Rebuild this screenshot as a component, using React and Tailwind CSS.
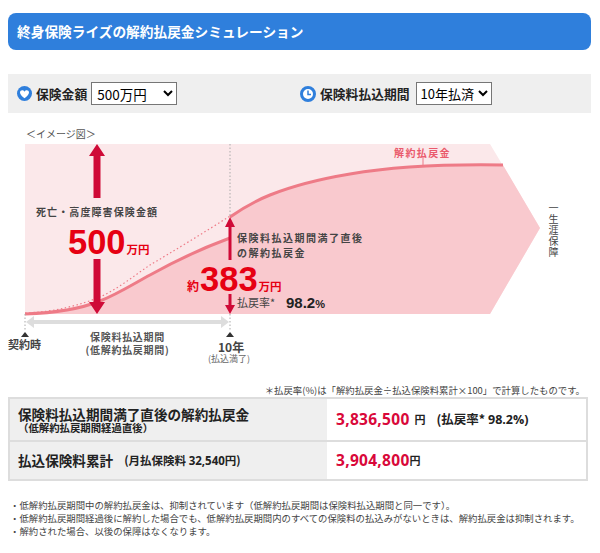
import React from 'react';

const jp = { fontFamily: '"Noto Sans CJK JP", sans-serif' };
const num = { fontFamily: '"Open Sans", sans-serif' };

function Chart() {
  return (
    <div className="relative h-[259px] w-[600px]">
      {/* coordinates below are page x, page y - 125 */}
      <svg className="absolute left-0 top-0" width="600" height="259" viewBox="0 0 600 259">
        <polygon points="25,19 490,19 540,103 490,189 25,189" fill="#fbe8ea" />
        <path d="M25,189 C55,188 80,184 100,176 C118,169 135,158 150,150 C168,140 200,124 230,113 L230,92 C240,85 255,76 270,70 C295,60 320,54 350,49 C385,43 440,39 503,40 L540,103 L490,189 Z" fill="#f9c9ce" />
        <path d="M25,188 C55,187 80,180 100,172 C118,164 135,150 150,140 C172,127 205,107 230,91" fill="none" stroke="#ee7b87" strokeWidth="1.2" strokeDasharray="1.5 2.5" />
        <path d="M25,189 C55,188 80,184 100,176 C118,169 135,158 150,150 C168,140 200,124 230,113" fill="none" stroke="#ee7b87" strokeWidth="3" />
        <path d="M230,92 C240,85 255,76 270,70 C295,60 320,54 350,49 C385,43 440,39 503,40" fill="none" stroke="#ee7b87" strokeWidth="3" />
        <line x1="423" y1="33" x2="423" y2="41" stroke="#ee7b87" strokeWidth="1" />
        <line x1="230" y1="19" x2="230" y2="92" stroke="#aaaaaa" strokeWidth="1" strokeDasharray="1.5 2" />
        <line x1="25" y1="189" x2="25" y2="205" stroke="#aaaaaa" strokeWidth="1" strokeDasharray="1.5 2" />
        <line x1="230" y1="189" x2="230" y2="205" stroke="#aaaaaa" strokeWidth="1" strokeDasharray="1.5 2" />
        {/* big arrow */}
        <path d="M97,19 L105,31 L100.5,31 L100.5,73 L93.5,73 L93.5,31 L89,31 Z" fill="#cf0a37" />
        <path d="M97,189 L105,177 L100.5,177 L100.5,134 L93.5,134 L93.5,177 L89,177 Z" fill="#cf0a37" />
        {/* small arrow */}
        <path d="M230,92 L235,102 L231.5,102 L231.5,135 L228.5,135 L228.5,102 L225,102 Z" fill="#cf0a37" />
        <path d="M230,189 L235,180 L231.5,180 L231.5,169 L228.5,169 L228.5,180 L225,180 Z" fill="#cf0a37" />
        {/* period arrow */}
        <path d="M26,197 L34,191 L34,195 L221,195 L221,191 L229,197 L221,203 L221,199 L34,199 L34,203 Z" fill="#dddddd" />
        <path d="M25,207 L29,212 L21,212 Z" fill="#333333" />
        <path d="M230,207 L234,212 L226,212 Z" fill="#333333" />
      </svg>

      <span className="absolute left-[26px] top-[2px] text-[10px] leading-[14px] text-[#555555]">＜イメージ図＞</span>
      <span className="absolute left-[36px] top-[80px] text-[10px] font-bold leading-[14px] tracking-[1.1px] text-[#444444]">死亡・高度障害保険金額</span>
      <span className="absolute left-[68px] top-[102px] flex items-baseline leading-[30px] text-[#e60012]" style={{ fontFamily: '"Liberation Sans", sans-serif' }}>
        <span className="text-[34.5px] font-bold">500</span>
        <span className="ml-[1px] text-[11.5px] font-bold" style={jp}>万円</span>
      </span>
      <span className="absolute left-[237px] top-[105px] text-[10px] font-bold leading-[15px] tracking-[1.5px] text-[#444444]">保険料払込期間満了直後<br />の解約払戻金</span>
      <span className="absolute left-[187px] top-[139px] flex items-baseline leading-[30px] text-[#e60012]" style={{ fontFamily: '"Liberation Sans", sans-serif' }}>
        <span className="text-[12px] font-bold" style={jp}>約</span>
        <span className="ml-[1px] text-[34.5px] font-bold">383</span>
        <span className="ml-[1px] text-[11.5px] font-bold" style={jp}>万円</span>
      </span>
      <span className="absolute left-[237px] top-[170px] text-[11px] leading-[14px] text-[#444444]">払戻率*</span>
      <span className="absolute left-[286px] top-[169px] text-[15px] font-bold leading-[18px] text-[#222222]" style={{ fontFamily: '"Liberation Sans", sans-serif' }}>98.2<span className="text-[11px]">%</span></span>
      <span className="absolute left-[394px] top-[21px] text-[10px] font-bold leading-[14px] tracking-[1.4px] text-[#ea5a6c]">解約払戻金</span>
      <span className="absolute left-[546px] top-[78px] text-[10px] leading-[14px] tracking-[1px] text-[#444444] [writing-mode:vertical-rl]">一生涯保障</span>
      <span className="absolute left-[8px] top-[212px] text-[11px] font-bold leading-[14px] text-[#444444]">契約時</span>
      <span className="absolute left-[65px] top-[205px] w-[125px] text-center text-[10px] font-bold leading-[13px] tracking-[0.7px] text-[#555555]">保険料払込期間<br />(低解約払戻期間)</span>
      <span className="absolute left-[218px] top-[215px] text-[12px] font-bold leading-[13px] text-[#444444]">10年</span>
      <span className="absolute left-[208px] top-[228px] text-[9px] leading-[11px] text-[#666666]">(払込満了)</span>
    </div>
  );
}

export default function App() {
  return (
    <div className="w-[600px] bg-white" style={jp}>
      <div className="h-[13px]" />
      <div className="mx-2 flex h-[37px] w-[583px] items-center rounded-lg bg-[#2f7fdc] pl-[9px] text-[13.7px] font-bold text-white">
        終身保険ライズの解約払戻金シミュレーション
      </div>

      <div className="mx-2 mt-[24px] flex h-[39px] w-[583px] items-center bg-[#efefef] pl-[9px] text-[12.8px] font-bold text-[#222222]">
        <div className="flex w-[283px] items-center">
          <svg width="15" height="15" viewBox="0 0 16 16">
            <circle cx="8" cy="8" r="8" fill="#2f7fdc" />
            <path d="M8,13 C5,10.5 3.2,8.8 3.2,6.8 C3.2,4.4 6.6,3.8 8,6 C9.4,3.8 12.8,4.4 12.8,6.8 C12.8,8.8 11,10.5 8,13 Z" fill="white" />
          </svg>
          <span className="ml-[4px]">保険金額</span>
          <select defaultValue="500万円" className="ml-[4px] h-[23px] w-[86px] border border-[#767676] bg-white pl-[1px] text-[13.5px] font-normal text-black" style={{ appearance: 'auto', ...jp }}>
            <option>500万円</option>
          </select>
        </div>
        <div className="flex items-center">
          <svg width="16" height="16" viewBox="0 0 16 16">
            <circle cx="8" cy="8" r="6.5" fill="white" stroke="#2f7fdc" strokeWidth="3" />
            <path d="M8,4.5 L8,8.5 L11,8.5" fill="none" stroke="#2f7fdc" strokeWidth="1.5" />
          </svg>
          <span className="ml-[4px]">保険料払込期間</span>
          <select defaultValue="10年払済" className="ml-[6px] h-[23px] w-[76px] border border-[#767676] bg-white text-[13px] font-normal text-black" style={{ appearance: 'auto', ...jp }}>
            <option>10年払済</option>
          </select>
        </div>
      </div>

      <div className="h-[12px]" />
      <Chart />

      <p className="mr-[15px] text-right text-[9.4px] leading-[13px] text-[#444444]">＊払戻率(%)は「解約払戻金÷払込保険料累計×100」で計算したものです。</p>

      <div className="ml-2 w-[580px] border-2 border-[#dddddd]">
        <div className="flex h-[43px] border-b-2 border-[#dddddd]">
          <div className="flex w-[317px] flex-col justify-center bg-[#efefef] pl-[8px] font-bold text-[#222222]">
            <span className="text-[13.6px] leading-[15px]">保険料払込期間満了直後の解約払戻金</span>
            <span className="text-[10.4px] leading-[11px]">（低解約払戻期間経過直後）</span>
          </div>
          <div className="flex items-center pl-[9px] font-bold">
            <span className="text-[15.5px] tracking-[0.3px] text-[#d9083a]" style={num}>3,836,500</span>
            <span className="ml-[5px] text-[11px] text-[#222222]">円</span>
            <span className="ml-[11px] text-[12.5px] text-[#222222]">(払戻率* <span style={num}>98.2%)</span></span>
          </div>
        </div>
        <div className="flex h-[37px]">
          <div className="flex w-[317px] items-center bg-[#efefef] pl-[8px] font-bold text-[#222222]">
            <span className="text-[13.6px]">払込保険料累計</span>
            <span className="ml-[11px] text-[11.5px]">(月払保険料 <span style={num}>32,540</span>円)</span>
          </div>
          <div className="flex items-center pl-[9px] font-bold">
            <span className="text-[15.5px] tracking-[0.3px] text-[#d9083a]" style={num}>3,904,800</span>
            <span className="text-[11px] text-[#222222]">円</span>
          </div>
        </div>
      </div>

      <ul className="ml-[10px] mt-[18px] text-[9.4px] leading-[13px] text-[#444444]">
        <li>・低解約払戻期間中の解約払戻金は、抑制されています（低解約払戻期間は保険料払込期間と同一です）。</li>
        <li>・低解約払戻期間経過後に解約した場合でも、低解約払戻期間内のすべての保険料の払込みがないときは、解約払戻金は抑制されます。</li>
        <li>・解約された場合、以後の保障はなくなります。</li>
      </ul>
    </div>
  );
}
